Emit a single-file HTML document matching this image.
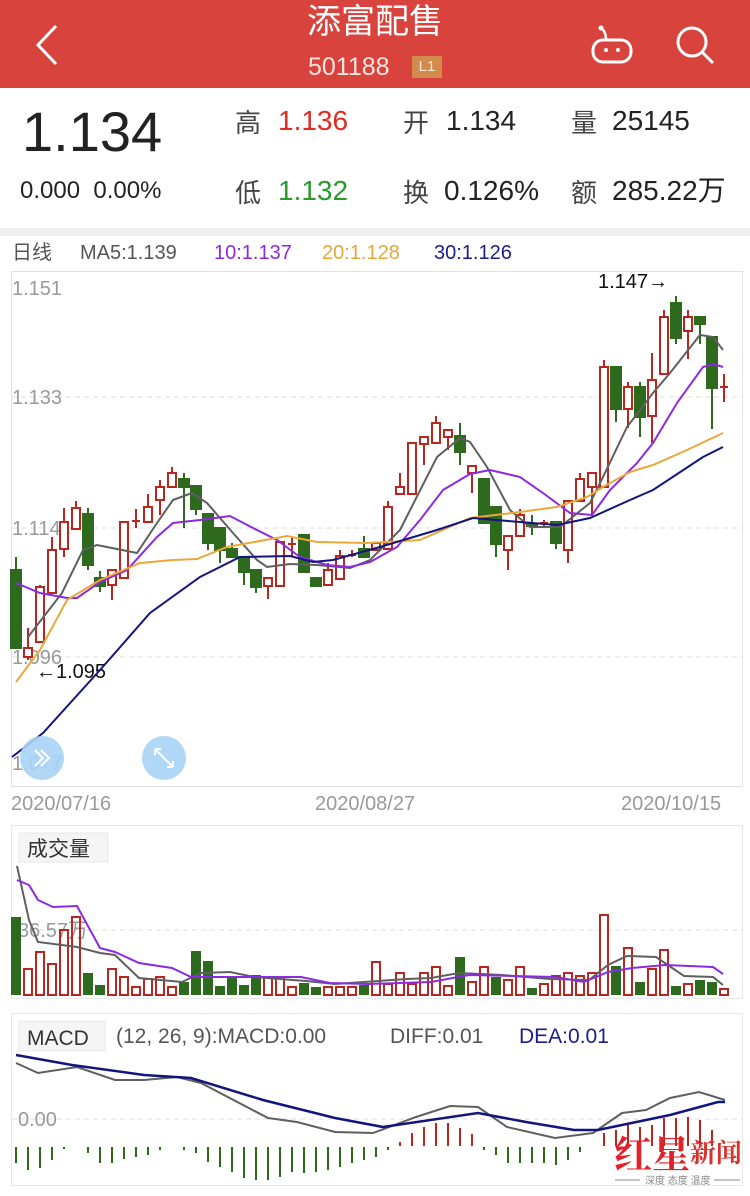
<!DOCTYPE html>
<html><head><meta charset="utf-8"><style>
*{margin:0;padding:0;box-sizing:border-box}
body{width:750px;height:1196px;background:#fff;font-family:"Liberation Sans","Noto Sans CJK SC",sans-serif;position:relative;overflow:hidden}
.a{position:absolute;white-space:nowrap}
</style></head><body>
<div class="a" style="left:0;top:0;width:750px;height:88px;background:#d8433d"></div>
<div class="a" style="left:0;top:2px;width:750px;text-align:center;color:#fff;font-size:34px;line-height:40px">添富配售</div>
<div class="a" style="left:308px;top:52px;color:#fbe3e0;font-size:25px;line-height:30px">501188</div>
<div class="a" style="left:412px;top:56px;width:30px;height:22px;background:#d28b4c;color:#fbe7d4;font-size:15px;line-height:22px;text-align:center">L1</div>
<svg class="a" style="left:0;top:0" width="750" height="88">
<polyline points="56,26 38,45 56,64" fill="none" stroke="#fff" stroke-width="3"/>
<rect x="593" y="40" width="38" height="22" rx="10" fill="none" stroke="#fff" stroke-width="3"/>
<path d="M606 40 C606 33 604 30 601 28" fill="none" stroke="#fff" stroke-width="2.5"/>
<circle cx="601" cy="28" r="2.5" fill="#fff"/>
<circle cx="606" cy="50" r="2" fill="#fff"/><circle cx="618" cy="50" r="2" fill="#fff"/>
<circle cx="692" cy="42" r="14" fill="none" stroke="#fff" stroke-width="3"/>
<line x1="702" y1="52" x2="713" y2="63" stroke="#fff" stroke-width="3"/>
</svg>
<div class="a" style="left:22px;top:100px;font-size:56px;line-height:64px;color:#222">1.134</div>
<div class="a" style="left:20px;top:176px;font-size:24px;line-height:30px;color:#222">0.000&nbsp;&nbsp;0.00%</div>
<div class="a" style="left:235px;top:106px;font-size:26px;line-height:34px;color:#444">高</div>
<div class="a" style="left:278px;top:104px;font-size:28px;line-height:34px;color:#e02a22">1.136</div>
<div class="a" style="left:403px;top:106px;font-size:26px;line-height:34px;color:#444">开</div>
<div class="a" style="left:446px;top:104px;font-size:28px;line-height:34px;color:#222">1.134</div>
<div class="a" style="left:571px;top:106px;font-size:26px;line-height:34px;color:#444">量</div>
<div class="a" style="left:612px;top:104px;font-size:28px;line-height:34px;color:#222">25145</div>
<div class="a" style="left:235px;top:176px;font-size:26px;line-height:34px;color:#444">低</div>
<div class="a" style="left:278px;top:174px;font-size:28px;line-height:34px;color:#2a9a2a">1.132</div>
<div class="a" style="left:403px;top:176px;font-size:26px;line-height:34px;color:#444">换</div>
<div class="a" style="left:444px;top:174px;font-size:28px;line-height:34px;color:#222">0.126%</div>
<div class="a" style="left:571px;top:176px;font-size:26px;line-height:34px;color:#444">额</div>
<div class="a" style="left:612px;top:174px;font-size:28px;line-height:34px;color:#222">285.22万</div>
<div class="a" style="left:0;top:228px;width:750px;height:8px;background:#efefef"></div>
<div class="a" style="left:12px;top:241px;font-size:20px;line-height:24px;color:#555">日线</div>
<div class="a" style="left:80px;top:241px;font-size:20px;line-height:24px;color:#555">MA5:1.139</div>
<div class="a" style="left:214px;top:241px;font-size:20px;line-height:24px;color:#8a2be2">10:1.137</div>
<div class="a" style="left:322px;top:241px;font-size:20px;line-height:24px;color:#e3a73a">20:1.128</div>
<div class="a" style="left:434px;top:241px;font-size:20px;line-height:24px;color:#1c1c8c">30:1.126</div>

<svg class="a" style="left:0;top:0" width="750" height="1196" font-family="Liberation Sans, Noto Sans CJK SC, sans-serif">
<rect x="11.5" y="271.5" width="731" height="515" fill="none" stroke="#e2e2e2"/>
<g stroke="#ddd" stroke-dasharray="5,4"><line x1="12" y1="397" x2="742" y2="397"/><line x1="12" y1="528" x2="742" y2="528"/><line x1="12" y1="657" x2="742" y2="657"/></g>
<g fill="#999" font-size="20"><text x="12" y="295">1.151</text><text x="12" y="404">1.133</text><text x="12" y="535">1.114</text><text x="12" y="664">1.096</text><text x="12" y="770">1.077</text></g>
<text x="598" y="288" font-size="20" fill="#111">1.147→</text>
<text x="36" y="678" font-size="20" fill="#111">←1.095</text>
<g stroke="#b8261f" stroke-width="2" fill="#fff">
<line x1="28" y1="628" x2="28" y2="660"/><rect x="24" y="648" width="8" height="9"/>
<line x1="40" y1="585" x2="40" y2="642"/><rect x="36" y="587" width="8" height="55"/>
<line x1="52" y1="537" x2="52" y2="593"/><rect x="48" y="550" width="8" height="43"/>
<line x1="64" y1="508" x2="64" y2="557"/><rect x="60" y="522" width="8" height="27"/>
<line x1="76" y1="501" x2="76" y2="529"/><rect x="72" y="508" width="8" height="21"/>
<line x1="112" y1="570" x2="112" y2="600"/><rect x="108" y="570" width="8" height="15"/>
<rect x="120" y="522" width="8" height="56"/>
<line x1="136" y1="509" x2="136" y2="528"/><line x1="132" y1="521" x2="140" y2="521"/>
<line x1="148" y1="494" x2="148" y2="522"/><rect x="144" y="507" width="8" height="15"/>
<line x1="160" y1="480" x2="160" y2="515"/><rect x="156" y="487" width="8" height="13"/>
<line x1="172" y1="467" x2="172" y2="487"/><rect x="168" y="473" width="8" height="14"/>
<line x1="268" y1="578" x2="268" y2="599"/><rect x="264" y="578" width="8" height="8"/>
<rect x="276" y="542" width="8" height="44"/>
<line x1="292" y1="537" x2="292" y2="557"/><line x1="288" y1="544" x2="296" y2="544"/>
<line x1="328" y1="563" x2="328" y2="585"/><rect x="324" y="570" width="8" height="15"/>
<line x1="340" y1="550" x2="340" y2="579"/><rect x="336" y="556" width="8" height="23"/>
<line x1="352" y1="550" x2="352" y2="557"/><line x1="348" y1="555" x2="356" y2="555"/>
<rect x="372" y="543" width="8" height="7"/>
<line x1="388" y1="501" x2="388" y2="549"/><rect x="384" y="507" width="8" height="42"/>
<line x1="400" y1="473" x2="400" y2="494"/><rect x="396" y="487" width="8" height="7"/>
<rect x="408" y="443" width="8" height="51"/>
<line x1="424" y1="437" x2="424" y2="465"/><rect x="420" y="437" width="8" height="7"/>
<line x1="436" y1="416" x2="436" y2="443"/><rect x="432" y="423" width="8" height="20"/>
<line x1="448" y1="430" x2="448" y2="450"/><rect x="444" y="430" width="8" height="7"/>
<line x1="472" y1="466" x2="472" y2="493"/><rect x="468" y="466" width="8" height="7"/>
<line x1="508" y1="536" x2="508" y2="570"/><rect x="504" y="536" width="8" height="14"/>
<line x1="520" y1="509" x2="520" y2="536"/><rect x="516" y="515" width="8" height="21"/>
<line x1="544" y1="520" x2="544" y2="527"/><line x1="540" y1="523" x2="548" y2="523"/>
<line x1="568" y1="501" x2="568" y2="563"/><rect x="564" y="501" width="8" height="49"/>
<line x1="580" y1="473" x2="580" y2="501"/><rect x="576" y="479" width="8" height="22"/>
<line x1="592" y1="473" x2="592" y2="515"/><rect x="588" y="473" width="8" height="14"/>
<line x1="604" y1="360" x2="604" y2="487"/><rect x="600" y="367" width="8" height="120"/>
<line x1="628" y1="382" x2="628" y2="428"/><rect x="624" y="387" width="8" height="22"/>
<line x1="652" y1="353" x2="652" y2="443"/><rect x="648" y="380" width="8" height="36"/>
<line x1="664" y1="310" x2="664" y2="374"/><rect x="660" y="317" width="8" height="57"/>
<line x1="688" y1="310" x2="688" y2="359"/><rect x="684" y="317" width="8" height="14"/>
<line x1="724" y1="374" x2="724" y2="402"/><line x1="720" y1="387" x2="728" y2="387"/>
</g>
<g stroke="#2d6a1e" stroke-width="2" fill="#2d6a1e">
<line x1="16" y1="557" x2="16" y2="648"/><rect x="11" y="570" width="10" height="78"/>
<line x1="88" y1="508" x2="88" y2="570"/><rect x="83" y="514" width="10" height="51"/>
<line x1="100" y1="571" x2="100" y2="592"/><rect x="95" y="578" width="10" height="8"/>
<line x1="184" y1="473" x2="184" y2="528"/><rect x="179" y="479" width="10" height="8"/>
<line x1="196" y1="486" x2="196" y2="515"/><rect x="191" y="486" width="10" height="23"/>
<line x1="208" y1="514" x2="208" y2="550"/><rect x="203" y="514" width="10" height="29"/>
<line x1="220" y1="528" x2="220" y2="563"/><rect x="215" y="528" width="10" height="22"/>
<line x1="232" y1="543" x2="232" y2="557"/><rect x="227" y="549" width="10" height="8"/>
<line x1="244" y1="557" x2="244" y2="585"/><rect x="239" y="557" width="10" height="15"/>
<line x1="256" y1="570" x2="256" y2="593"/><rect x="251" y="570" width="10" height="17"/>
<rect x="299" y="535" width="10" height="37"/>
<rect x="311" y="578" width="10" height="8"/>
<line x1="364" y1="536" x2="364" y2="557"/><rect x="359" y="549" width="10" height="8"/>
<line x1="460" y1="423" x2="460" y2="465"/><rect x="455" y="436" width="10" height="16"/>
<rect x="479" y="479" width="10" height="44"/>
<line x1="496" y1="507" x2="496" y2="557"/><rect x="491" y="507" width="10" height="37"/>
<line x1="532" y1="515" x2="532" y2="535"/><rect x="527" y="524" width="10" height="2"/>
<line x1="556" y1="522" x2="556" y2="549"/><rect x="551" y="522" width="10" height="21"/>
<line x1="616" y1="367" x2="616" y2="422"/><rect x="611" y="367" width="10" height="42"/>
<line x1="640" y1="382" x2="640" y2="437"/><rect x="635" y="387" width="10" height="30"/>
<line x1="676" y1="296" x2="676" y2="344"/><rect x="671" y="303" width="10" height="35"/>
<line x1="700" y1="317" x2="700" y2="344"/><rect x="695" y="317" width="10" height="7"/>
<line x1="712" y1="337" x2="712" y2="429"/><rect x="707" y="337" width="10" height="51"/>
</g>
<g fill="none" stroke-width="2">
<polyline stroke="#5f5f5f" points="28,637 62,593 83,550 97,545 137,553 157,523 173,500 192,493 207,503 233,533 257,560 267,567 290,564 317,565 350,568 370,560 400,530 437,457 460,438 470,442 487,467 510,510 530,527 560,527 590,503 603,477 627,427 653,393 670,373 700,335 713,337 723,350"/>
<polyline stroke="#8a2be2" points="16,583 40,593 67,598 77,598 100,582 127,570 157,537 173,523 200,520 230,516 253,528 277,540 300,557 327,565 350,567 370,562 397,547 420,520 443,490 470,474 490,470 520,477 543,493 570,513 592,515 610,490 637,463 653,443 677,403 703,367 713,364 723,367"/>
<polyline stroke="#eaa83a" points="16,682 40,650 67,600 100,580 140,563 173,560 197,559 227,547 287,536 317,542 367,543 420,540 470,518 520,512 557,507 587,497 603,487 630,472 653,465 687,450 723,433"/>
<polyline stroke="#14147e" points="12,757 43,733 100,670 150,613 200,577 240,557 290,556 313,562 333,560 380,547 437,530 473,518 520,522 557,525 590,518 630,500 653,490 703,457 723,447"/>
</g>
<circle cx="42" cy="758" r="22" fill="#a9d3f6" opacity=".9"/>
<path d="M35 750 l8 8 -8 8 M41 750 l8 8 -8 8" stroke="#fff" stroke-width="2" fill="none"/>
<circle cx="164" cy="758" r="22" fill="#a9d3f6" opacity=".9"/>
<path d="M155 749 l18 18 M155 749 h6 M155 749 v6 M173 767 h-6 M173 767 v-6" stroke="#fff" stroke-width="2" fill="none"/>
<g fill="#999" font-size="20"><text x="11" y="810">2020/07/16</text><text x="315" y="810">2020/08/27</text><text x="621" y="810">2020/10/15</text></g>
<rect x="11.5" y="825.5" width="731" height="173" fill="none" stroke="#e8e8e8"/>
<rect x="19" y="833" width="89" height="29" fill="#f5f5f5" stroke="#e8e8e8"/>
<text x="27" y="856" font-size="21" fill="#333">成交量</text>
<line x1="12" y1="930" x2="742" y2="930" stroke="#ddd" stroke-dasharray="5,4"/>
<text x="18" y="937" font-size="20" fill="#999">36.57万</text>
<g stroke="#b8261f" stroke-width="2" fill="none">
<rect x="24" y="969" width="8" height="26"/><rect x="36" y="952" width="8" height="43"/><rect x="48" y="964" width="8" height="31"/><rect x="60" y="930" width="8" height="65"/><rect x="72" y="917" width="8" height="78"/>
<rect x="108" y="969" width="8" height="26"/><rect x="120" y="977" width="8" height="18"/><rect x="132" y="987" width="8" height="8"/><rect x="144" y="979" width="8" height="16"/><rect x="156" y="977" width="8" height="18"/><rect x="168" y="987" width="8" height="8"/>
<rect x="264" y="977" width="8" height="18"/><rect x="276" y="977" width="8" height="18"/><rect x="288" y="987" width="8" height="8"/>
<rect x="324" y="987" width="8" height="8"/><rect x="336" y="987" width="8" height="8"/><rect x="348" y="987" width="8" height="8"/>
<rect x="372" y="962" width="8" height="33"/><rect x="384" y="984" width="8" height="11"/><rect x="396" y="973" width="8" height="22"/><rect x="408" y="984" width="8" height="11"/><rect x="420" y="973" width="8" height="22"/><rect x="432" y="967" width="8" height="28"/>
<rect x="444" y="986" width="8" height="9"/><rect x="468" y="982" width="8" height="13"/><rect x="480" y="967" width="8" height="28"/><rect x="504" y="980" width="8" height="15"/><rect x="516" y="967" width="8" height="28"/>
<rect x="540" y="984" width="8" height="11"/><rect x="552" y="976" width="8" height="19"/><rect x="564" y="973" width="8" height="22"/><rect x="600" y="915" width="8" height="80"/><rect x="576" y="976" width="8" height="19"/><rect x="588" y="973" width="8" height="22"/>
<rect x="624" y="948" width="8" height="47"/><rect x="648" y="969" width="8" height="26"/><rect x="660" y="950" width="8" height="45"/><rect x="684" y="984" width="8" height="11"/><rect x="720" y="989" width="8" height="6"/>
</g>
<g fill="#2d6a1e">
<rect x="11" y="917" width="10" height="78"/><rect x="83" y="973" width="10" height="22"/><rect x="95" y="985" width="10" height="10"/>
<rect x="179" y="982" width="10" height="13"/><rect x="191" y="951" width="10" height="44"/><rect x="203" y="961" width="10" height="34"/><rect x="215" y="986" width="10" height="9"/><rect x="227" y="977" width="10" height="18"/><rect x="239" y="985" width="10" height="10"/><rect x="251" y="975" width="10" height="20"/>
<rect x="299" y="983" width="10" height="12"/><rect x="311" y="987" width="10" height="8"/><rect x="359" y="985" width="10" height="10"/>
<rect x="455" y="957" width="10" height="38"/><rect x="491" y="977" width="10" height="18"/><rect x="527" y="988" width="10" height="7"/><rect x="611" y="966" width="10" height="29"/>
<rect x="635" y="982" width="10" height="13"/><rect x="671" y="986" width="10" height="9"/><rect x="695" y="980" width="10" height="15"/><rect x="707" y="982" width="10" height="13"/>
</g>
<g fill="none" stroke-width="2">
<polyline stroke="#5f5f5f" points="17,866 29,920 38,942 77,947 100,953 115,955 139,978 182,982 201,973 230,972 254,977 306,981 335,984 407,979 431,978 459,973 502,975 550,979 589,980 608,965 627,956 656,957 684,976 713,977 723,985"/>
<polyline stroke="#8a2be2" points="17,880 29,885 38,900 53,907 77,906 100,948 115,952 139,963 172,968 191,977 301,977 330,983 368,984 431,982 469,975 555,977 584,982 608,972 632,968 665,965 713,967 723,974"/>
</g>
<rect x="11.5" y="1013.5" width="731" height="172" fill="none" stroke="#e8e8e8"/>
<rect x="19" y="1021" width="86" height="30" fill="#f5f5f5" stroke="#e8e8e8"/>
<text x="27" y="1045" font-size="21" fill="#333">MACD</text>
<text x="116" y="1043" font-size="21" fill="#555">(12, 26, 9):MACD:0.00</text>
<text x="390" y="1043" font-size="21" fill="#555">DIFF:0.01</text>
<text x="519" y="1043" font-size="21" fill="#1c1c8c">DEA:0.01</text>
<line x1="12" y1="1119" x2="742" y2="1119" stroke="#ddd" stroke-dasharray="5,4"/>
<text x="18" y="1126" font-size="20" fill="#999">0.00</text>
<g stroke="#2d6a1e" stroke-width="2">
<line x1="16" y1="1147" x2="16" y2="1163"/><line x1="28" y1="1147" x2="28" y2="1170"/><line x1="40" y1="1147" x2="40" y2="1168"/><line x1="52" y1="1147" x2="52" y2="1160"/><line x1="64" y1="1147" x2="64" y2="1149"/><line x1="88" y1="1147" x2="88" y2="1153"/><line x1="100" y1="1147" x2="100" y2="1163"/><line x1="112" y1="1147" x2="112" y2="1163"/><line x1="124" y1="1147" x2="124" y2="1159"/><line x1="136" y1="1147" x2="136" y2="1157"/><line x1="148" y1="1147" x2="148" y2="1155"/><line x1="160" y1="1147" x2="160" y2="1150"/><line x1="184" y1="1147" x2="184" y2="1150"/><line x1="196" y1="1147" x2="196" y2="1153"/><line x1="208" y1="1147" x2="208" y2="1162"/><line x1="220" y1="1147" x2="220" y2="1167"/><line x1="232" y1="1147" x2="232" y2="1172"/><line x1="244" y1="1147" x2="244" y2="1178"/><line x1="256" y1="1147" x2="256" y2="1180"/><line x1="268" y1="1147" x2="268" y2="1180"/><line x1="280" y1="1147" x2="280" y2="1177"/><line x1="292" y1="1147" x2="292" y2="1172"/><line x1="304" y1="1147" x2="304" y2="1173"/><line x1="316" y1="1147" x2="316" y2="1172"/><line x1="328" y1="1147" x2="328" y2="1170"/><line x1="340" y1="1147" x2="340" y2="1167"/><line x1="352" y1="1147" x2="352" y2="1163"/><line x1="364" y1="1147" x2="364" y2="1160"/><line x1="376" y1="1147" x2="376" y2="1157"/><line x1="388" y1="1147" x2="388" y2="1150"/>
<line x1="484" y1="1147" x2="484" y2="1150"/><line x1="496" y1="1147" x2="496" y2="1155"/><line x1="508" y1="1147" x2="508" y2="1163"/><line x1="520" y1="1147" x2="520" y2="1163"/><line x1="532" y1="1147" x2="532" y2="1163"/><line x1="544" y1="1147" x2="544" y2="1163"/><line x1="556" y1="1147" x2="556" y2="1165"/><line x1="568" y1="1147" x2="568" y2="1160"/><line x1="580" y1="1147" x2="580" y2="1152"/>
</g>
<g stroke="#b8261f" stroke-width="2">
<line x1="400" y1="1146" x2="400" y2="1142"/><line x1="412" y1="1146" x2="412" y2="1133"/><line x1="424" y1="1146" x2="424" y2="1127"/><line x1="436" y1="1146" x2="436" y2="1123"/><line x1="448" y1="1146" x2="448" y2="1123"/><line x1="460" y1="1146" x2="460" y2="1128"/><line x1="472" y1="1146" x2="472" y2="1134"/>
<line x1="604" y1="1146" x2="604" y2="1133"/><line x1="616" y1="1146" x2="616" y2="1130"/><line x1="628" y1="1146" x2="628" y2="1125"/><line x1="640" y1="1146" x2="640" y2="1127"/><line x1="652" y1="1146" x2="652" y2="1125"/><line x1="664" y1="1146" x2="664" y2="1118"/><line x1="676" y1="1146" x2="676" y2="1118"/><line x1="688" y1="1146" x2="688" y2="1117"/><line x1="700" y1="1146" x2="700" y2="1120"/><line x1="712" y1="1146" x2="712" y2="1130"/>
</g>
<g fill="none" stroke-width="2">
<polyline stroke="#5f5f5f" points="16,1063 38,1073 77,1067 115,1080 144,1080 177,1077 201,1083 268,1118 297,1122 335,1132 373,1133 416,1117 450,1106 478,1107 507,1127 555,1138 593,1133 622,1113 646,1110 670,1098 699,1092 725,1100"/>
<polyline stroke="#14147e" stroke-width="2.5" points="16,1055 72,1065 144,1075 191,1078 263,1100 335,1118 383,1127 478,1113 526,1122 574,1130 598,1130 670,1115 718,1102 725,1102"/>
</g>
<text x="614" y="1168" font-size="38" font-family="Noto Serif CJK SC, serif" font-weight="bold" fill="#e0232a">红星</text>
<text x="690" y="1162" font-size="26" font-family="Noto Serif CJK SC, serif" font-weight="bold" fill="#d8302a">新闻</text>
<line x1="615" y1="1180" x2="640" y2="1180" stroke="#888"/><line x1="714" y1="1180" x2="740" y2="1180" stroke="#888"/>
<text x="645" y="1184" font-size="10" fill="#888">深度 态度 温度</text>
</svg>
</body></html>
